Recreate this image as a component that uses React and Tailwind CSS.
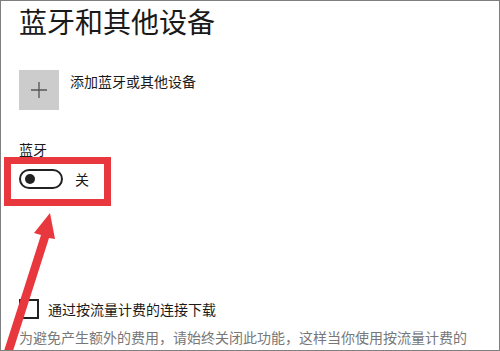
export default function App() {
  return (
    <div
      className="relative w-[500px] h-[351px] overflow-hidden bg-white border border-[#7f7f7f] text-[#1a1a1a]"
      style={{ fontFamily: '"Noto Sans CJK SC", "Noto Sans", sans-serif' }}
    >
      <div className="flex flex-col pl-[18px]">
        <h1 className="mt-[2px] text-[28px] leading-[36px] font-normal">蓝牙和其他设备</h1>

        {/* add device */}
        <div className="mt-[31px] flex items-start gap-[11px]">
          <div className="w-[40px] h-[40px] bg-[#cccccc] flex items-center justify-center">
            <svg width="18" height="18" viewBox="0 0 18 18">
              <path d="M9 1v16M1 9h16" stroke="#555" strokeWidth="1.3" />
            </svg>
          </div>
          <span className="mt-[1px] text-[14px] leading-5">添加蓝牙或其他设备</span>
        </div>

        {/* bluetooth */}
        <div className="mt-[29px] text-[14px] leading-5">蓝牙</div>
        <div className="mt-[10px] flex items-center gap-[12px]">
          <div className="w-[44px] h-[20px] rounded-full border-2 border-[#222] flex items-center pl-[4px]">
            <div className="w-[10px] h-[10px] rounded-full bg-[#222]" />
          </div>
          <span className="text-[14px] leading-5">关</span>
        </div>

        {/* metered */}
        <div className="mt-[110px] flex items-center gap-[9px]">
          <div className="w-[20px] h-[20px] border-2 border-[#222]" />
          <span className="text-[14px] leading-5">通过按流量计费的连接下载</span>
        </div>
        <p className="mt-[8px] text-[14px] leading-5 text-[#777] whitespace-nowrap">
          为避免产生额外的费用，请始终关闭此功能，这样当你使用按流量计费的
        </p>
      </div>

      {/* annotation */}
      <div className="absolute left-[3px] top-[156px] w-[107px] h-[49px] border-[7px] border-[#e8383d]" />
      <svg className="absolute left-0 top-0" width="500" height="351" viewBox="0 0 500 351">
        <polygon points="49,212 33,232 40,234 3,350 12,350 48,237 54,238" fill="#e8383d" />
      </svg>
    </div>
  );
}
